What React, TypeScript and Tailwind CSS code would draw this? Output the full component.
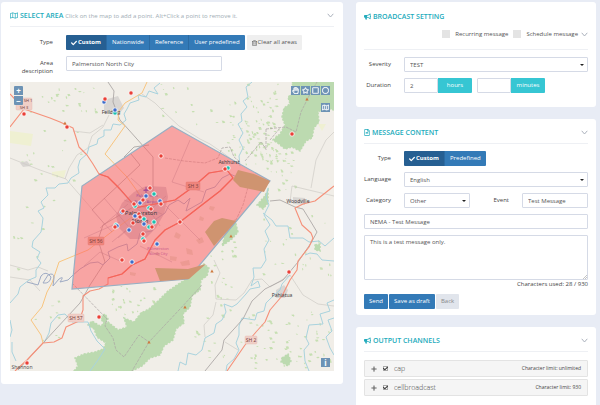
import { useState } from 'react';
import type { ReactNode } from 'react';
import {
  FaBullhorn, FaCheck, FaPlus, FaRegCircle, FaRegFileAlt, FaRegHandPaper,
  FaRegMap, FaRegSquare, FaRegStar, FaRegTrashAlt,
} from 'react-icons/fa';
import clsx from 'clsx';

type Point = [number, number];

const field =
  'h-[15px] min-w-0 rounded-[1px] border border-[#d5dae6] bg-white px-[5px] text-[6px] leading-none text-[#555] outline-none';
const labelText = 'pt-[3px] text-right text-[6px] leading-[8px] text-[#444]';
const row = 'grid grid-cols-[27px_1fr] gap-x-[13px]';

function Chevron() {
  return (
    <button type="button" aria-label="Collapse" className="text-[#a3a9b5]">
      <svg viewBox="0 0 7 5" className="w-[7px] h-[5px]" fill="none" stroke="currentColor" strokeWidth="0.9">
        <path d="M0.7 0.8 L3.5 4 L6.3 0.8" />
      </svg>
    </button>
  );
}

function Title({ icon, children }: { icon: ReactNode; children: ReactNode }) {
  return (
    <h2 className="flex items-center gap-[2px] text-[7px] leading-none font-semibold uppercase text-[#22abbc]">
      {icon}
      {children}
    </h2>
  );
}

function Header({ children }: { children: ReactNode }) {
  return (
    <header className="flex h-[25px] items-center justify-between border-b border-[#eef0f4] pt-[3px]">
      {children}
    </header>
  );
}

function TypeButtons({ options }: { options: string[] }) {
  const [active, setActive] = useState(options[0]);
  return (
    <div className="flex overflow-hidden rounded-[1px]">
      {options.map((option) => (
        <button
          key={option}
          type="button"
          onClick={() => setActive(option)}
          className={clsx(
            'flex h-[15px] items-center gap-px border-r border-[#2b6ba3] px-[5px] text-[6px] whitespace-nowrap text-white last:border-r-0',
            active === option ? 'bg-[#265f92] font-bold' : 'bg-[#337ab7]',
          )}
        >
          {active === option && <FaCheck className="h-[6px] w-[6px]" />}
          {option}
        </button>
      ))}
    </div>
  );
}

function Select({ id, value, className }: { id: string; value: string; className?: string }) {
  return (
    <div className={clsx('relative', className)}>
      <select id={id} defaultValue={value} className={clsx(field, 'block w-full appearance-none')}>
        <option>{value}</option>
      </select>
      <svg viewBox="0 0 4 2" className="pointer-events-none absolute top-[7px] right-[4px] h-[2px] w-[4px] fill-[#222]">
        <path d="M0 0h4L2 2z" />
      </svg>
    </div>
  );
}

const forests = [
  'M292 82 L334 82 L334 110 L326 108 L318 112 L319 122 L314 128 L312 138 L306 141 L300 151 L292 147 L285 149 L279 144 L273 140 L280 134 L285 125 L282 117 L284 108 L290 104 L288 97 L294 92z',
  'M74 371 L78 366 L75 358 L84 354 L95 352 L103 349 L106 343 L97 337 L94 329 L88 325 L92 321 L100 326 L108 322 L118 330 L127 327 L124 318 L134 322 L141 313 L149 309 L158 301 L168 291 L186 279 L196 270 L204 264 L209 268 L207 276 L201 280 L200 290 L192 296 L190 307 L183 314 L184 323 L176 329 L173 340 L164 346 L160 355 L150 358 L142 366 L132 371z',
  'M227 227 L235 220 L238 232 L232 239 L222 246z',
  'M268 190 L264 197 L257 205 L263 209 L268 203z',
  'M282 358 L288 354 L291 361 L288 366 L281 362z',
  'M315 245 L320 244 L320 251 L315 250z',
  'M100 317 L105 314 L108 319 L104 324z',
];

const urban = [
  'M104 100 L118 96 L124 108 L118 115 L104 113z',
  'M276 290 L284 285 L288 290 L285 298 L276 298z',
  'M122 203 L134 192 L146 186 L166 187 L168 197 L164 214 L156 228 L145 239 L130 239 L119 228 L116 216z',
  'M293 197 L305 198 L305 205 L293 204z',
  'M20 163 L27 161 L31 166 L23 167z',
];

const rivers = [
  'M160 83 L154 88 L158 94 L149 91 L146 97 L138 95 L139 100 L130 103 L127 109 L124 114 L126 120 L120 125 L113 124 L111 130 L104 130 L104 136 L98 139 L97 144 L89 147 L87 154 L80 160 L78 167 L79 173 L71 178 L68 183 L59 184 L55 188 L46 188 L48 195 L41 202 L44 208 L38 211 L43 218 L42 226 L41 232 L33 241 L32 247 L40 252 L37 258 L41 263 L36 270 L36 277 L29 280 L20 287 L18 294 L10 303',
  'M44 343 L49 333 L51 323 L58 315 L65 314 L72 322 L88 322 L91 331 L97 341 L105 349 L98 360 L90 371',
  'M10 320 L12 330 L10 337 M12 342 L12 352 L16 361',
  'M252 82 L246 87 L248 97 L243 101 L247 107 L241 114 L242 121 L238 124 L243 133 L239 140 L243 148 L239 156 L240 166',
  'M268 188 L266 197 L269 205 L264 215 L270 225 L265 231 L269 240 L264 249 L266 260 L261 268 L253 268 L254 277 L251 286 L258 281 L260 287 L250 289 L246 294 L237 304 L232 307 L224 304 L226 312 L222 320 L216 324 L214 333 L205 338 L202 350 L196 355 L188 353 L186 365 L180 362 L178 371',
  'M263 213 L272 220 L276 226 L288 226 L290 238 L303 238 L309 242 L319 241 L325 246 L334 238',
  'M305 255 L310 253 L317 254 L322 260 L334 261',
  'M290 275 L282 284 L280 290 L270 299 L266 303 L264 311 L257 313 L255 320 L242 318 L239 326 L239 335 L236 343 L239 350 L234 359 L227 365 L226 371',
  'M334 300 L327 303 L330 311 L320 314 L323 324 L309 325 L306 338 L309 344 L304 350 L305 361 L309 371',
  'M334 318 L328 320 L332 331 L326 337 L330 348 L334 355',
];

const winding = [
  'M27 282 L38 285 L41 276 Q46 270 51 277 Q50 284 43 283 L48 275 Q54 272 54 278 L53 286 L59 279 Q65 275 60 282 L68 280 L72 276 L80 269 L90 263 L98 262 L103 265 L110 258 L108 252 L118 247 L127 244 L128 251 L137 244 L140 233 L152 231 L156 219 L165 213 L169 205 L178 200 L184 204 L190 198 L186 211 L202 202 L206 190 L215 187 L222 178 L230 174 L237 177 L249 184 L262 181 L270 181',
];

const minorRoads = [
  'M10 158 L40 170 L66 179 L92 209 L105 225',
  'M65 179 L69 168 L77 155 L88 148 L92 136 L103 127 L109 115',
  'M10 277 L30 280 L40 291 M10 265 L28 270 L38 267 L48 271',
  'M73 131 L90 133 L103 125 M142 94 L155 103 L165 113 L179 126 L200 139 L210 144 L226 155 L237 164',
  'M214 260 L220 273 L215 285 L216 299 L236 300 L244 293 L252 280 L262 279 L270 287 L290 275 L303 295 L318 304 L334 306',
  'M216 302 L213 315 L204 325 L205 337 M225 342 L238 350',
  'M290 202 L292 186 L334 196 M311 188 L316 160 L326 140 L334 132',
];

const rails = [
  'M108 82 L114 91 L113 102 L120 120 L153 157 L153 205 M18 370 L43 343 L80 303 L90 285 L105 262 L98 240 L103 225 L135 206',
  'M205 371 L222 350 L224 340 L243 319 L252 301 L265 289 L283 280 L298 262 L311 243 L317 232 L311 222 L303 209 L295 207 L280 200 L270 201',
  'M131 154 L140 165 L92 210 M124 157 L134 147 L149 145',
];

const tracks = [
  'M72 283 L107 319 L105 326 L113 338 L116 350 L124 357 L139 335 L149 342 L180 309 L202 285 M149 342 L132 371',
  'M266 129 L266 150 M266 129 L286 127 L296 132 L301 112 L309 96 L317 82 M245 161 L261 142 L266 149 M270 140 L280 128',
  'M165 158 L184 161 L205 163 L218 158 L222 148 L230 147 L234 157 L240 162 M250 180 L243 205 L236 220',
];

const redRoads = [
  'M10 127 L24 109 L10 94 M24 109 L50 118 L60 122 L73 128 L79 147 L87 155 L93 164 L99 174 L108 177 L119 188 L134 205',
  'M15 371 L27 360 L43 343 L54 342 L62 338 L66 327 L79 321 L83 310 L83 296 L90 291 L99 289 L108 284 L108 278 L122 274 L132 265 L145 259 L155 240 L165 230 L180 222 L198 208 L220 191 L233 178 L227 170 L209 173 L193 187 L175 200 L160 203 L135 208',
  'M334 186 L315 201 L303 204 L295 208 L302 225 L311 233 L313 238 L309 247 L298 261 L297 270 L290 280 L282 296 L270 310 L265 322 L256 332 L245 345 L227 371',
];

const orangeRoads = [
  'M147 82 L142 93 L125 103 L119 111 L118 120 L125 126 L105 154 L127 177 L140 195',
  'M132 217 L114 230 L88 250 L59 262 L52 283 L47 292 L42 307 L31 320 L41 335 L43 343',
];

const woods = [
  'M238 170 L254 174 L270 181 L264 192 L250 189 L240 187 L233 180z',
  'M214 221 L222 218 L236 221 L214 246 L205 232z',
  'M155 268 L188 269 L206 264 L189 279 L160 281z',
];

const shields = [
  { x: 193, y: 186, w: 14, text: 'SH 3' },
  { x: 96, y: 241, w: 16, text: 'SH 56' },
  { x: 76, y: 318, w: 16, text: 'SH 57' },
  { x: 251, y: 340, w: 12, text: 'SH 2' },
];

const places = [
  { x: 111, y: 114, size: 5, text: 'Feilding' },
  { x: 229, y: 164, size: 5, text: 'Ashhurst' },
  { x: 298, y: 203, size: 5, text: 'Woodville' },
  { x: 282, y: 297, size: 5, text: 'Pahiatua' },
  { x: 141, y: 215, size: 6, text: 'Palmerston' },
  { x: 140, y: 223, size: 6, text: 'North' },
];

const peaks: Point[] = [[65, 123], [149, 342], [231, 236], [212, 271], [185, 307], [307, 99]];

const markers: { color: string; points: Point[] }[] = [
  {
    color: '#19bfae',
    points: [[154, 194], [135, 206], [149, 208], [154, 222], [149, 227], [143, 239], [144, 219], [116, 225], [228, 168], [115, 113]],
  },
  {
    color: '#3d6cc9',
    points: [[146, 196], [140, 203], [160, 201], [135, 216], [144, 224], [129, 230], [157, 244], [132, 262], [122, 212], [117, 226], [104, 102], [115, 110]],
  },
  {
    color: '#ea3f36',
    points: [
      [150, 188], [143, 200], [134, 204], [161, 204], [151, 209], [123, 211], [139, 214], [140, 217], [133, 223],
      [115, 227], [152, 227], [143, 234], [144, 241], [180, 222], [122, 260], [24, 114], [67, 127], [105, 99],
      [131, 93], [161, 156], [225, 169], [292, 134], [289, 272], [99, 317], [27, 363],
    ],
  },
];

// x, y, width, height, number of patches
const scrub: [number, number, number, number, number][] = [
  [30, 84, 70, 30, 24],
  [12, 120, 70, 60, 16],
  [160, 84, 75, 40, 18],
  [245, 84, 35, 80, 70],
  [225, 120, 50, 40, 40],
  [265, 150, 30, 40, 24],
  [12, 200, 50, 160, 20],
  [110, 284, 50, 30, 26],
  [205, 240, 30, 70, 20],
  [262, 215, 68, 60, 26],
  [240, 310, 92, 58, 60],
  [190, 310, 40, 50, 12],
];

function buildScrub() {
  let seed = 7;
  const next = () => {
    seed = (seed * 16807) % 2147483647;
    return seed / 2147483647;
  };
  return scrub.flatMap(([x, y, w, h, count]) =>
    Array.from({ length: count }, () => {
      const px = x + next() * w;
      const py = y + next() * h;
      const a = 0.8 + next() * 2;
      const b = 0.6 + next() * 1.6;
      const tilt = next() - 0.5;
      return `M${px.toFixed(1)} ${py.toFixed(1)}l${a.toFixed(1)} ${tilt.toFixed(1)}l${(a * 0.4).toFixed(1)} ${b.toFixed(1)}l${(-a).toFixed(1)} ${(b * 0.3).toFixed(1)}z`;
    }),
  );
}

const scrubPath = buildScrub().join('');

function Lines({ paths, color, width, dash }: { paths: string[]; color: string; width: number; dash?: string }) {
  return (
    <path d={paths.join(' ')} fill="none" stroke={color} strokeWidth={width} strokeDasharray={dash} strokeLinejoin="round" />
  );
}

function MapDrawing() {
  return (
    <svg viewBox="10 82 324 289" className="block w-full bg-[#f1eee8]" fontFamily='"Noto Sans", sans-serif' textAnchor="middle">
      <path d="M10 131 L33 134 L31 146 L10 143z M52 172 L66 170 L64 178 L52 176z M318 124 L326 124 L322 131z" fill="#eff0d2" />
      <path d={scrubPath} fill="#c6dfb2" />
      <path d={forests.join(' ')} fill="#bcdab0" stroke="#bcdab0" strokeWidth="1.5" strokeDasharray="2 1.5" />
      <path d={urban.join(' ')} fill="#d9d6d3" />
      <Lines paths={minorRoads} color="#cfcbc6" width={0.7} />
      <Lines paths={rivers} color="#a9d3de" width={1} />
      <Lines paths={tracks} color="#aaa3a3" width={0.7} dash="3 1" />
      <Lines paths={rails} color="#a5a09e" width={0.8} />
      <Lines paths={orangeRoads} color="#f8c580" width={1} />
      <Lines paths={winding} color="#9fabc4" width={1} />
      <Lines paths={redRoads} color="#f59079" width={1.1} />

      <path d="M172 126 L270 181 L188 279 L72 289 L82 186z" fill="#ff5f64" fillOpacity="0.52" stroke="#98afc3" strokeWidth="1.2" />
      <path d={woods.join(' ')} fill="#cf9470" />
      <path
        d="M176 232l5 3l-2 4l-5 -2z M186 248l6 2l1 5l-6 -1z M200 216l4 2l-1 3l-4 -1z M170 256l7 1l-1 4l-6 -1z M196 240l6 -3l2 5l-5 2z M180 262l9 -2l1 5l-8 1z M130 272l6 1l-1 3l-5 -1z M156 252l4 1l-1 3l-4 -1z M210 206l5 1l-2 4l-4 -2z"
        fill="#dc8c7a"
        fillOpacity="0.4"
      />
      <path d="M122 203 L134 192 L146 186 L166 187 L168 197 L164 214 L156 228 L145 239 L130 239 L119 228 L116 216z" fill="#cf6f80" fillOpacity="0.2" />
      <g fill="none" stroke="#c9737f" strokeWidth="0.5" strokeOpacity="0.8">
        <path d="M92 210 L112 232 M104 198 L128 226 M118 188 L150 222 M131 178 L152 197 M112 242 L154 207 M100 228 L128 204 M118 238 L166 196 M124 200 L162 214 M136 190 L160 226 M84 266 L100 252 L122 262 M166 206 L200 240 M190 140 L172 182 L204 192 M84 238 L120 222 M140 246 L172 262" />
      </g>
      <g fill="none" stroke="#f4645a" strokeWidth="1.1">
        <path d="M99 174 L108 177 L119 188 L134 205 M108 278 L122 274 L132 265 L145 259 L155 240 L165 230 L180 222 L198 208 L220 191 L233 178 L227 170 L209 173 L193 187 L175 200 L160 203 L135 208" />
      </g>

      {shields.map((shield) => (
        <g key={shield.text}>
          <rect
            x={shield.x - shield.w / 2}
            y={shield.y - 4}
            width={shield.w}
            height="8"
            rx="1"
            fill={shield.y < 300 ? '#ef857d' : '#f0cfc7'}
            stroke={shield.y < 300 ? '#e2736b' : '#e7b9ae'}
            strokeWidth="0.4"
          />
          <text x={shield.x} y={shield.y + 2} fontSize="5" fill="#7d4440">{shield.text}</text>
        </g>
      ))}
      <rect x="16" y="98" width="16" height="12" rx="1" fill="#f0cfc7" stroke="#e7b9ae" strokeWidth="0.4" />
      <g fontSize="4" fill="#75403c">
        <text x="28" y="102">SH 1</text>
        <text x="24" y="109">SH 3</text>
      </g>
      <g fontSize="4" fill="#a54f94">
        <text x="147" y="197">Palmerston</text>
        <text x="147" y="203">North Airport</text>
        <path d="M145.500 187 h1 v2 l2 1 v1 h-2 v2 h-1 v-2 h-2 v-1 l2 -1z" />
      </g>
      <g fontSize="4" fill="#c8568b">
        <text x="158" y="250">Palmerston</text>
        <text x="158" y="255">North City</text>
      </g>
      {places.map((place) => (
        <text key={place.text} x={place.x} y={place.y} fontSize={place.size} fill="#453c3f">{place.text}</text>
      ))}
      <text x="22" y="369" fontSize="5" fill="#555">Shannon</text>

      {peaks.map(([x, y]) => (
        <path key={`${x}-${y}`} d={`M${x} ${y - 1.5} l1.700 3 h-3.400z`} fill="#cf7a3e" />
      ))}
      {markers.map(({ color, points }) =>
        points.map(([x, y]) => (
          <circle key={`${color}-${x}-${y}`} cx={x} cy={y} r="2.200" fill={color} stroke="#fff" strokeWidth="0.8" />
        )),
      )}
    </svg>
  );
}

const drawTools = [
  { label: 'Pan', Icon: FaRegHandPaper },
  { label: 'Draw polygon', Icon: FaRegStar },
  { label: 'Draw box', Icon: FaRegSquare },
  { label: 'Draw circle', Icon: FaRegCircle },
];

const mapButton = 'flex h-[9px] w-[9px] items-center justify-center bg-[#6d93b5] text-[8px] leading-none font-bold text-white';

function AreaMap() {
  return (
    <div className="relative mt-[7px]">
      <MapDrawing />
      <div className="absolute top-1 left-1 flex flex-col gap-px">
        <button type="button" aria-label="Zoom in" className={clsx(mapButton, 'rounded-t-[1px]')}>+</button>
        <button type="button" aria-label="Zoom out" className={clsx(mapButton, 'rounded-b-[1px]')}>−</button>
      </div>
      <div className="absolute top-1 right-1 flex gap-px">
        {drawTools.map(({ label, Icon }) => (
          <button key={label} type="button" aria-label={label} className={mapButton}>
            <Icon className="h-[7px] w-[7px]" stroke="currentColor" strokeWidth="24" />
          </button>
        ))}
      </div>
      <button type="button" aria-label="Layers" className={clsx(mapButton, 'absolute top-[21px] right-1')}>
        <FaRegMap className="h-[7px] w-[7px]" stroke="currentColor" strokeWidth="24" />
      </button>
      <button type="button" aria-label="Attribution" className={clsx(mapButton, 'absolute right-1 bottom-1')}>i</button>
    </div>
  );
}

function SelectArea() {
  return (
    <section className="self-start rounded-[3px] bg-white px-[9px] pb-[13px]">
      <Header>
        <div className="flex items-center gap-[2px]">
          <Title icon={<FaRegMap className="h-[7px] w-[8px]" />}>Select area</Title>
          <p className="text-[6px] leading-none text-[#9eacb4]">Click on the map to add a point. Alt+Click a point to remove it.</p>
        </div>
        <Chevron />
      </Header>
      <div className="grid grid-cols-[43px_1fr] gap-x-[13px] gap-y-[6px] pt-2">
        <span className={labelText}>Type</span>
        <div className="flex gap-[2px]">
          <TypeButtons options={['Custom', 'Nationwide', 'Reference', 'User predefined']} />
          <button type="button" className="flex h-[15px] items-center gap-px rounded-[1px] bg-[#efefef] px-[5px] text-[6px] whitespace-nowrap text-[#555]">
            <FaRegTrashAlt className="h-[6px] w-[5px]" />
            Clear all areas
          </button>
        </div>
        <label htmlFor="area" className={labelText}>Area description</label>
        <input id="area" defaultValue="Palmerston North City" className={clsx(field, 'w-7/12')} />
      </div>
      <AreaMap />
    </section>
  );
}

function DurationField({ label, value }: { label: string; value: string }) {
  return (
    <div className="flex w-[68px]">
      <input id={label} defaultValue={value} className={clsx(field, 'w-1/2')} />
      <label htmlFor={label} className="flex h-[15px] w-1/2 items-center justify-center rounded-r-[1px] bg-[#36c6d3] text-[6px] text-white">
        {label}
      </label>
    </div>
  );
}

function BroadcastSetting() {
  return (
    <section className="rounded-[3px] bg-white px-2 pb-[14px]">
      <header className="border-b border-[#eef0f4] pt-[3px] pb-2">
        <div className="flex h-[22px] items-center">
          <Title icon={<FaBullhorn className="h-[7px] w-[7px]" />}>Broadcast setting</Title>
        </div>
        <div className="flex h-[14px] items-center justify-end gap-[3px]">
          <div className="flex gap-[5px]">
            {['Recurring message', 'Schedule message'].map((text) => (
              <label key={text} className="flex items-center gap-[5px] text-[6px] leading-none text-[#555]">
                <input type="checkbox" className="h-2 w-2 appearance-none bg-[#e4e4e4] checked:bg-[#36c6d3]" />
                {text}
              </label>
            ))}
          </div>
          <Chevron />
        </div>
      </header>
      <div className="flex flex-col gap-[6px] pt-[7px]">
        <div className={row}>
          <label htmlFor="severity" className={labelText}>Severity</label>
          <Select id="severity" value="TEST" />
        </div>
        <div className={row}>
          <span className={labelText}>Duration</span>
          <div className="flex gap-[5px]">
            <DurationField label="hours" value="2" />
            <DurationField label="minutes" value="" />
          </div>
        </div>
      </div>
    </section>
  );
}

function MessageContent() {
  return (
    <section className="rounded-[3px] bg-white px-2 pb-[6px]">
      <Header>
        <Title icon={<FaRegFileAlt className="h-[7px] w-[6px]" />}>Message content</Title>
        <Chevron />
      </Header>
      <div className="flex flex-col gap-[6px] pt-[7px]">
        <div className={row}>
          <span className={labelText}>Type</span>
          <div className="flex">
            <TypeButtons options={['Custom', 'Predefined']} />
          </div>
        </div>
        <div className={row}>
          <label htmlFor="language" className={labelText}>Language</label>
          <Select id="language" value="English" />
        </div>
        <div className={row}>
          <label htmlFor="category" className={labelText}>Category</label>
          <div className="flex gap-[13px]">
            <Select id="category" value="Other" className="w-[66px]" />
            <label htmlFor="event" className={clsx(labelText, 'flex-1')}>Event</label>
            <input id="event" defaultValue="Test Message" className={clsx(field, 'w-[66px]')} />
          </div>
        </div>
        <input aria-label="Headline" defaultValue="NEMA - Test Message" className={field} />
        <div>
          <div className="relative">
            <textarea
              aria-label="Message"
              defaultValue="This is a test message only."
              className="block h-[45px] w-full resize-none rounded-[1px] border border-[#d5dae6] px-[5px] py-[2px] text-[6px] leading-[8px] text-[#555] outline-none"
            />
            <svg viewBox="0 0 4 4" className="pointer-events-none absolute right-px bottom-px h-1 w-1" stroke="#888" strokeWidth="0.5">
              <path d="M0 4 L4 0 M2 4 L4 2" />
            </svg>
          </div>
          <p className="text-right text-[6px] leading-[8px] text-[#444]">Characters used: 28 / 930</p>
        </div>
        <div className="flex gap-px text-[6px] text-white">
          <button type="button" className="h-[15px] rounded-[1px] bg-[#337ab7] px-[5px]">Send</button>
          <button type="button" className="h-[15px] rounded-[1px] bg-[#337ab7] px-[5px]">Save as draft</button>
          <button type="button" className="h-[15px] rounded-[1px] bg-[#e1e5ec] px-[5px] text-[#888]">Back</button>
        </div>
      </div>
    </section>
  );
}

const channels = [
  { name: 'cap', limit: 'unlimited' },
  { name: 'cellbroadcast', limit: '930' },
];

function OutputChannels() {
  return (
    <section className="flex-1 rounded-t-[3px] bg-white px-2">
      <Header>
        <Title icon={<FaBullhorn className="h-[7px] w-[7px]" />}>Output channels</Title>
        <Chevron />
      </Header>
      <ul className="flex flex-col gap-[2px] pt-2">
        {channels.map(({ name, limit }) => (
          <li key={name} className="flex h-[17px] items-center gap-[6px] rounded-[1px] border border-[#e3e3e3] bg-[#f5f5f5] px-[6px]">
            <button type="button" aria-label={`Expand ${name}`} className="text-[#666]">
              <FaPlus className="h-[6px] w-[6px]" />
            </button>
            <span className="relative flex">
              <input id={name} type="checkbox" defaultChecked className="peer h-[5px] w-[5px] appearance-none border border-[#aaa] bg-white" />
              <FaCheck className="pointer-events-none absolute inset-0 hidden h-[5px] w-[5px] text-[#333] peer-checked:block" />
            </span>
            <label htmlFor={name} className="text-[7px] leading-none font-light text-[#444]">{name}</label>
            <span className="ml-auto text-[5px] leading-none text-[#444]">Character limit: {limit}</span>
          </li>
        ))}
      </ul>
    </section>
  );
}

export default function App() {
  return (
    <main className="grid min-h-screen grid-cols-[57fr_40fr] gap-[13px] bg-[#e8ecf5] pt-[2px] pr-1 pl-px font-['Open_Sans',sans-serif]">
      <SelectArea />
      <div className="flex flex-col gap-3">
        <BroadcastSetting />
        <MessageContent />
        <OutputChannels />
      </div>
    </main>
  );
}
